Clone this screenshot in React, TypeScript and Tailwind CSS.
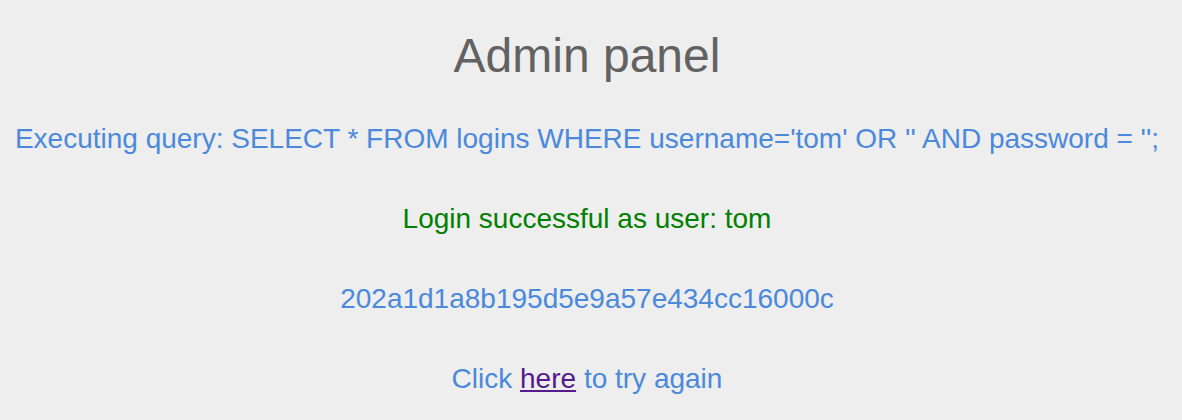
export default function App() {
  return (
    <div
      className="min-h-[420px] w-full bg-[#eeeeee] flex flex-col items-center pt-[28px] pr-[8px] text-center"
      style={{ fontFamily: '"Liberation Sans", Arial, sans-serif' }}
    >
      <h1 className="text-[48px] leading-[55px] text-[#626262] font-normal">Admin panel</h1>
      <div className="mt-[40px] flex flex-col items-center gap-[48px] text-[28px] leading-[32px]">
        <p className="text-[#4a89dc] whitespace-nowrap">
          Executing query: SELECT * FROM logins WHERE username='tom' OR '' AND password = '';
        </p>
        <p className="text-[#008000]">Login successful as user: tom</p>
        <p className="text-[#4a89dc]">202a1d1a8b195d5e9a57e434cc16000c</p>
        <p className="text-[#4a89dc]">
          Click{" "}
          <a href="#" className="text-[#551a8b] underline">
            here
          </a>{" "}
          to try again
        </p>
      </div>
    </div>
  );
}
